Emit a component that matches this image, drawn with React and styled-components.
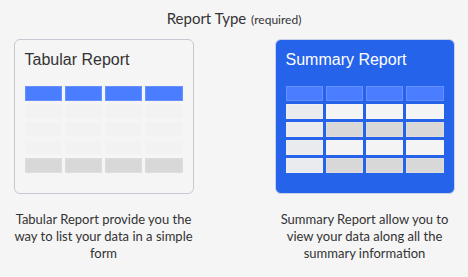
import React from 'react';
import styled, { createGlobalStyle } from 'styled-components';

const GlobalStyle = createGlobalStyle`
    body {
        margin: 0;
        background: #f5f5f5;
        font-family: Lato, "Open Sans", sans-serif;
        color: #333333;
    }
`;

const tones = {
    head: '#4a7dff',
    blank: '#f2f2f2',
    light: '#f4f4f4',
    side: '#e9ebef',
    gray: '#d8d8d8',
};

const tabularRows = [
    ['head', 'head', 'head', 'head'],
    ['blank', 'blank', 'blank', 'blank'],
    ['blank', 'blank', 'blank', 'blank'],
    ['blank', 'blank', 'blank', 'blank'],
    ['gray', 'gray', 'gray', 'gray'],
];

const summaryRows = [
    ['head', 'head', 'head', 'head'],
    ['side', 'light', 'light', 'light'],
    ['side', 'gray', 'gray', 'gray'],
    ['side', 'light', 'light', 'light'],
    ['side', 'gray', 'gray', 'gray'],
];

const reportTypes = [
    {
        name: 'Tabular Report',
        rows: tabularRows,
        selected: false,
        text: 'Tabular Report provide you the way to list your data in a simple form',
    },
    {
        name: 'Summary Report',
        rows: summaryRows,
        selected: true,
        text: 'Summary Report allow you to view your data along all the summary information',
    },
];

const Page = styled.div`
    padding-top: 9px;
    display: flex;
    flex-direction: column;
    align-items: center;
`;

const Heading = styled.div`
    font-size: 15px;
    line-height: 18px;
    color: #333333;

    small {
        font-size: 12px;
        margin-left: 1px;
    }
`;

const Options = styled.div`
    margin-top: 10px;
    display: flex;
    gap: 81px;
`;

const Option = styled.div`
    width: 180px;
    display: flex;
    flex-direction: column;
    align-items: center;
`;

const Card = styled.div`
    box-sizing: border-box;
    width: 180px;
    height: 155px;
    padding: 11px 10px 0 10px;
    border-radius: 6px;
    border: 1px solid ${p => p.selected ? '#c9d2e6' : '#c8c8d2'};
    background: ${p => p.selected ? '#2563eb' : '#f5f5f5'};
    cursor: pointer;
`;

const CardTitle = styled.div`
    font-family: "Liberation Sans", Arial, sans-serif;
    font-size: 16px;
    line-height: 18px;
    margin-bottom: 17px;
    color: ${p => p.selected ? '#ffffff' : '#333333'};
`;

const Table = styled.div`
    width: 158px;
    display: grid;
    grid-template-columns: repeat(4, 1fr);
    grid-auto-rows: 15px;
    gap: 3px 2.7px;
`;

const Cell = styled.div`
    background: ${p => tones[p.tone]};
    box-shadow: inset 0 0 0 1px rgba(255, 255, 255, 0.15);
`;

const Description = styled.p`
    margin: 17px 0 0 0;
    width: 190px;
    font-size: 13px;
    line-height: 17px;
    text-align: center;
    color: #333333;
`;

const App = () => {
    return (
        <Page>
            <GlobalStyle />
            <Heading>
                Report Type <small>(required)</small>
            </Heading>
            <Options>
                {
                    reportTypes.map(type => {
                        return <Option key={type.name}>
                            <Card selected={type.selected}>
                                <CardTitle selected={type.selected}>{type.name}</CardTitle>
                                <Table>
                                    {type.rows.map((row, r) =>
                                        row.map((tone, c) => <Cell key={r + '-' + c} tone={tone} />)
                                    )}
                                </Table>
                            </Card>
                            <Description>{type.text}</Description>
                        </Option>
                    })
                }
            </Options>
        </Page>
    );
}

export default App;
